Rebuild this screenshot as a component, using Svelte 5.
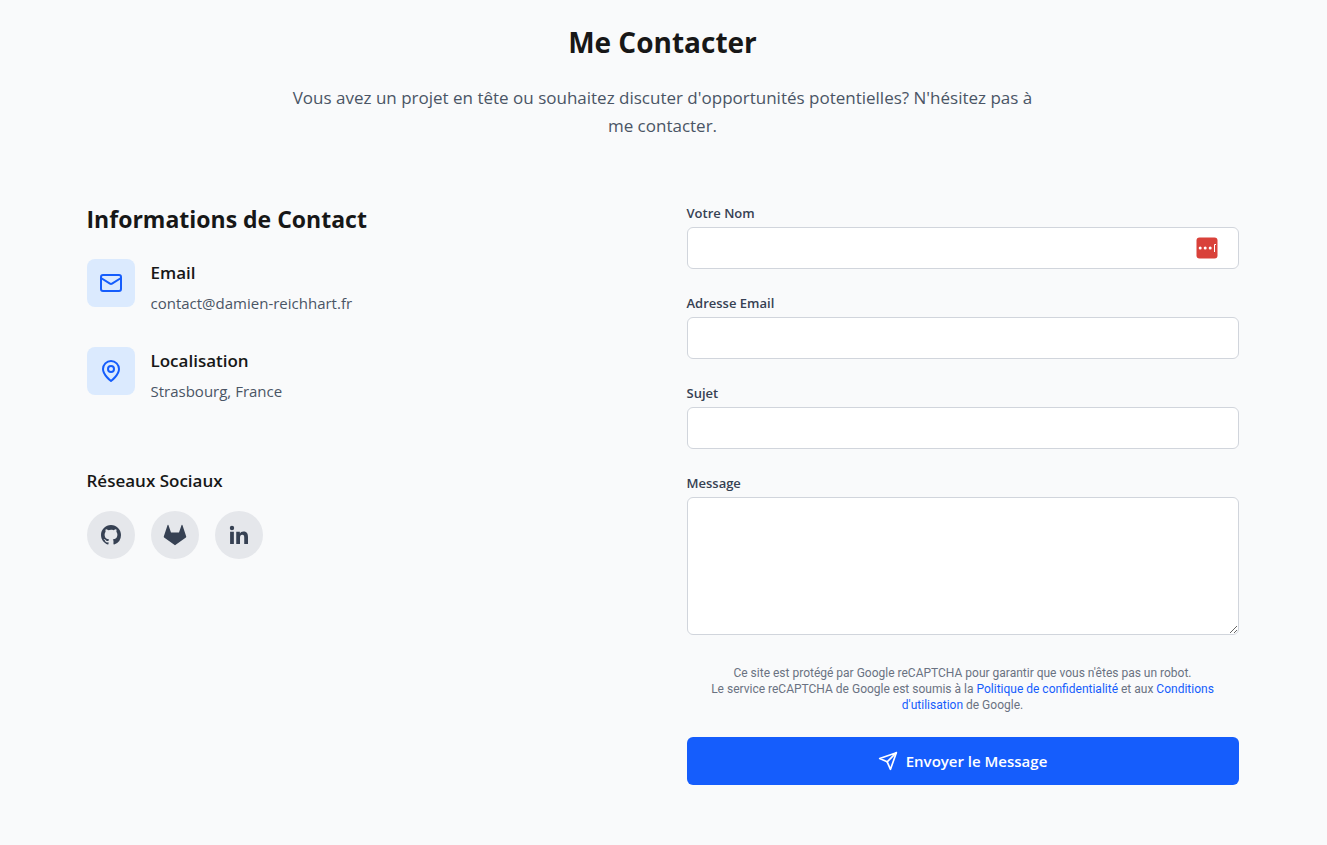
<script>
  const fields = [
    { id: 'name', label: 'Votre Nom', type: 'text', badge: true },
    { id: 'email', label: 'Adresse Email', type: 'email', badge: false },
    { id: 'subject', label: 'Sujet', type: 'text', badge: false }
  ];

  const socials = [
    {
      name: 'GitHub',
      href: '#github',
      path: 'M12 2C6.477 2 2 6.484 2 12.017c0 4.425 2.865 8.18 6.839 9.504.5.092.682-.217.682-.483 0-.237-.008-.868-.013-1.703-2.782.605-3.369-1.343-3.369-1.343-.454-1.158-1.11-1.466-1.11-1.466-.908-.62.069-.608.069-.608 1.003.07 1.531 1.032 1.531 1.032.892 1.53 2.341 1.088 2.91.832.092-.647.35-1.088.636-1.338-2.22-.253-4.555-1.113-4.555-4.951 0-1.093.39-1.988 1.029-2.688-.103-.253-.446-1.272.098-2.65 0 0 .84-.27 2.75 1.026A9.564 9.564 0 0112 6.844c.85.004 1.705.115 2.504.337 1.909-1.296 2.747-1.027 2.747-1.027.546 1.379.202 2.398.1 2.651.64.7 1.028 1.595 1.028 2.688 0 3.848-2.339 4.695-4.566 4.943.359.309.678.92.678 1.855 0 1.338-.012 2.419-.012 2.747 0 .268.18.58.688.482A10.019 10.019 0 0022 12.017C22 6.484 17.522 2 12 2z'
    },
    {
      name: 'GitLab',
      href: '#gitlab',
      path: 'M23.2 13.6L21.9 9.6 19.4 2a.42.42 0 0 0-.8 0l-2.6 7.4H8L5.4 2a.42.42 0 0 0-.8 0L2.1 9.6.8 13.6a.85.85 0 0 0 .3.9L12 22.2l10.9-7.7a.85.85 0 0 0 .3-.9z'
    },
    {
      name: 'LinkedIn',
      href: '#linkedin',
      path: 'M4.983 2.821a2.188 2.188 0 1 0 0 4.376 2.188 2.188 0 0 0 0-4.376zM9.237 8.855v12.139h3.769v-6.003c0-1.584.298-3.118 2.262-3.118 1.937 0 1.961 1.811 1.961 3.218v5.904H21v-6.657c0-3.27-.704-5.783-4.526-5.783-1.835 0-3.065 1.007-3.568 1.96h-.051v-1.66H9.237zm-6.142 0H6.87v12.139H3.095z'
    }
  ];
</script>

<main>
  <header>
    <h1>Me Contacter</h1>
    <p>
      Vous avez un projet en tête ou souhaitez discuter d'opportunités potentielles? N'hésitez pas à
      me contacter.
    </p>
  </header>

  <div class="columns">
    <section class="info">
      <h2>Informations de Contact</h2>
      <div class="details">
        <div class="detail">
          <span class="tile">
            <svg viewBox="0 0 24 24" aria-hidden="true">
              <rect x="2" y="4" width="20" height="16" rx="2" />
              <path d="M22 7l-8.97 5.7a1.94 1.94 0 0 1-2.06 0L2 7" />
            </svg>
          </span>
          <div>
            <h3>Email</h3>
            <p>contact@damien-reichhart.fr</p>
          </div>
        </div>
        <div class="detail">
          <span class="tile">
            <svg viewBox="0 0 24 24" aria-hidden="true">
              <path d="M20 10c0 6-8 12-8 12s-8-6-8-12a8 8 0 0 1 16 0z" />
              <circle cx="12" cy="10" r="3" />
            </svg>
          </span>
          <div>
            <h3>Localisation</h3>
            <p>Strasbourg, France</p>
          </div>
        </div>
      </div>
      <div class="networks">
        <h3>Réseaux Sociaux</h3>
        <div class="links">
          {#each socials as s}
            <a href={s.href} aria-label={s.name}>
              <svg viewBox="0 0 24 24" aria-hidden="true"><path d={s.path} /></svg>
            </a>
          {/each}
        </div>
      </div>
    </section>

    <form onsubmit={(e) => e.preventDefault()}>
      {#each fields as f}
        <div class="field">
          <label for={f.id}>{f.label}</label>
          <div class="control">
            <input id={f.id} type={f.type} />
            {#if f.badge}
              <svg class="badge" viewBox="0 0 22 22" aria-hidden="true">
                <rect x="0.5" y="0.5" width="21" height="21" rx="3" fill="#d9413a" />
                <circle cx="4.2" cy="11" r="1.5" />
                <circle cx="9.2" cy="11" r="1.5" />
                <circle cx="14.2" cy="11" r="1.5" />
                <path d="M20 7.5h-1.5V15" fill="none" stroke="#fff" />
              </svg>
            {/if}
          </div>
        </div>
      {/each}
      <div class="field message">
        <label for="message">Message</label>
        <textarea id="message" rows="5"></textarea>
      </div>
      <p class="legal">
        Ce site est protégé par Google reCAPTCHA pour garantir que vous n'êtes pas un robot.<br />
        Le service reCAPTCHA de Google est soumis à la
        <a href="#privacy">Politique de confidentialité</a> et aux
        <a href="#terms">Conditions d'utilisation</a> de Google.
      </p>
      <button type="submit">
        <svg viewBox="0 0 24 24" aria-hidden="true">
          <path d="M22 2l-7 20-4-9-9-4z" />
          <path d="M22 2L11 13" />
        </svg>
        Envoyer le Message
      </button>
    </form>
  </div>
</main>

<style>
  :global(body) {
    margin: 0;
    background: #f9fafb;
  }
  main {
    box-sizing: border-box;
    max-width: 1200px;
    margin: 0 auto;
    padding: 24px 25px 60px 23px;
    font-family: 'Segoe UI', 'Open Sans', 'Noto Sans', sans-serif;
    font-size: 15px;
    line-height: 24px;
    color: #171717;
  }
  h1, h2, h3, p {
    margin: 0;
  }
  header {
    max-width: 768px;
    margin: 0 auto 63px;
    text-align: center;
  }
  h1 {
    margin-bottom: 24px;
    font-size: 28px;
    line-height: 36px;
    font-weight: 700;
  }
  header p {
    font-size: 17px;
    line-height: 28px;
    color: #4a5565;
  }
  .columns {
    display: grid;
    grid-template-columns: 1fr 1fr;
    gap: 48px;
  }
  h2 {
    margin-bottom: 24px;
    font-size: 23px;
    line-height: 32px;
    font-weight: 700;
  }
  h3 {
    font-size: 17px;
    line-height: 28px;
    font-weight: 600;
  }
  .details {
    display: grid;
    gap: 32px;
  }
  .detail {
    display: flex;
    gap: 16px;
  }
  .detail p {
    margin-top: 4px;
    color: #4a5565;
  }
  .tile {
    display: grid;
    place-items: center;
    width: 48px;
    height: 48px;
    border-radius: 8px;
    background: #dbeafe;
  }
  .tile svg {
    width: 24px;
    height: 24px;
    fill: none;
    stroke: #155dfc;
    stroke-width: 2;
    stroke-linecap: round;
    stroke-linejoin: round;
  }
  .networks {
    margin-top: 64px;
  }
  .links {
    display: flex;
    gap: 16px;
    margin-top: 16px;
  }
  .links a {
    display: grid;
    place-items: center;
    width: 48px;
    height: 48px;
    border-radius: 50%;
    background: #e5e7eb;
  }
  .links svg {
    width: 24px;
    height: 24px;
    fill: #364153;
  }
  form {
    display: flex;
    flex-direction: column;
    gap: 24px;
  }
  .field {
    display: flex;
    flex-direction: column;
    gap: 4px;
  }
  .message {
    margin-bottom: 6px;
  }
  label {
    font-size: 13px;
    line-height: 20px;
    font-weight: 600;
    color: #364153;
  }
  .control {
    position: relative;
  }
  input,
  textarea {
    display: block;
    box-sizing: border-box;
    width: 100%;
    padding: 8px 16px;
    border: 1px solid #d1d5dc;
    border-radius: 6px;
    background: #fff;
    font: inherit;
    color: inherit;
  }
  input {
    height: 42px;
  }
  textarea {
    height: 138px;
    resize: vertical;
  }
  .badge {
    position: absolute;
    top: 10px;
    right: 21px;
    width: 22px;
    height: 22px;
    fill: #fff;
  }
  .legal {
    padding: 0 16px;
    font-family: 'Segoe UI', Roboto, 'Noto Sans', sans-serif;
    font-size: 12px;
    line-height: 16px;
    text-align: center;
    color: #6a7282;
  }
  .legal a {
    color: #155dfc;
    text-decoration: none;
  }
  button {
    display: flex;
    align-items: center;
    justify-content: center;
    gap: 8px;
    height: 48px;
    padding: 0 24px;
    border: 0;
    border-radius: 6px;
    background: #155dfc;
    color: #fff;
    font: inherit;
    font-weight: 600;
    cursor: pointer;
  }
  button svg {
    width: 20px;
    height: 20px;
    fill: none;
    stroke: currentColor;
    stroke-width: 2;
    stroke-linecap: round;
    stroke-linejoin: round;
  }
  @media (max-width: 800px) {
    .columns {
      grid-template-columns: 1fr;
    }
  }
</style>
